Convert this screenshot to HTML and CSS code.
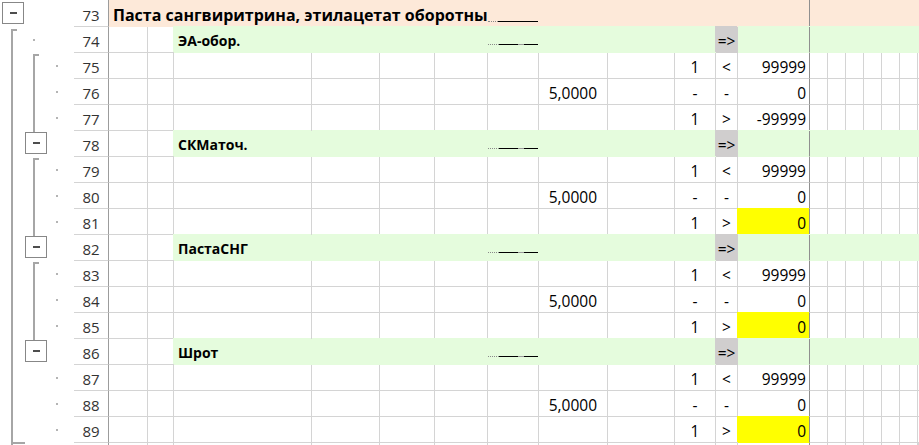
FILE: index.html
```html
<!DOCTYPE html>
<html lang="ru">
<head>
<meta charset="utf-8">
<title>Sheet</title>
<link rel="stylesheet" href="styles.css">
</head>
<body>
<div class="sheet">
  <div class="outline">
    <svg width="74" height="445" viewBox="0 0 74 445" xmlns="http://www.w3.org/2000/svg">
      <g class="br">
        <rect x="11" y="29" width="2" height="416"/>
        <rect x="11" y="29" width="6" height="2"/>
        <rect x="11" y="442" width="14" height="2"/>
        <rect x="33" y="54" width="6" height="2"/>
        <rect x="33" y="54" width="2" height="78"/>
        <rect x="33" y="158" width="6" height="2"/>
        <rect x="33" y="158" width="2" height="78"/>
        <rect x="33" y="262" width="6" height="2"/>
        <rect x="33" y="262" width="2" height="78"/>
      </g>
      <g class="dot">
        <rect x="33" y="39" width="2" height="2"/>
        <rect x="56" y="65" width="2" height="2"/>
        <rect x="56" y="91" width="2" height="2"/>
        <rect x="56" y="117" width="2" height="2"/>
        <rect x="56" y="169" width="2" height="2"/>
        <rect x="56" y="195" width="2" height="2"/>
        <rect x="56" y="221" width="2" height="2"/>
        <rect x="56" y="273" width="2" height="2"/>
        <rect x="56" y="299" width="2" height="2"/>
        <rect x="56" y="325" width="2" height="2"/>
        <rect x="56" y="377" width="2" height="2"/>
        <rect x="56" y="403" width="2" height="2"/>
        <rect x="56" y="429" width="2" height="2"/>
      </g>
      <g class="box">
        <rect x="2.5" y="2.5" width="21" height="21"/>
        <rect x="25.5" y="132.5" width="21" height="21"/>
        <rect x="25.5" y="236.5" width="21" height="21"/>
        <rect x="25.5" y="340.5" width="21" height="21"/>
      </g>
      <g class="minus">
        <rect x="10" y="12" width="7" height="2"/>
        <rect x="33" y="142" width="7" height="2"/>
        <rect x="33" y="246" width="7" height="2"/>
        <rect x="33" y="350" width="7" height="2"/>
      </g>
    </svg>
  </div>
  <div class="grid">
    <div class="row top">
      <div class="hd">73</div>
      <div class="pe t1">Паста сангвиритрина, этилацетат оборотный</div>
      <div class="pe ulc ul1"><span class="dots"></span><span class="ln ln-a"></span></div>
      <i class="pe"></i><i class="pe"></i><i class="pe"></i><i class="pe"></i>
      <i class="pe sep"></i>
      <i class="pe"></i><i class="pe"></i><i class="pe"></i><i class="pe"></i><i class="pe"></i><i class="pe"></i><i class="pe"></i>
    </div>

    <div class="row">
      <div class="hd">74</div>
      <i></i><i></i>
      <div class="gr gf t2">ЭА-обор.</div>
      <i class="gr"></i><i class="gr"></i><i class="gr"></i>
      <div class="gr ulc ul2"><span class="dots"></span><span class="ln ln-b"></span><span class="ln ln-c"></span><span class="ln ln-d"></span></div>
      <i class="gr"></i><i class="gr"></i><i class="gr"></i>
      <div class="gy ctr">=&gt;</div>
      <i class="gr sep"></i>
      <i class="gr"></i><i class="gr"></i><i class="gr"></i><i class="gr"></i><i class="gr"></i><i class="gr"></i><i class="gr"></i>
    </div>
    <div class="row">
      <div class="hd">75</div>
      <i></i><i></i><i></i><i></i><i></i><i></i><i></i><i></i><i></i>
      <div class="ctr">1</div><div class="ctr">&lt;</div><div class="rt sep">99999</div>
      <i></i><i></i><i></i><i></i><i></i><i></i><i></i>
    </div>
    <div class="row">
      <div class="hd">76</div>
      <i></i><i></i><i></i><i></i><i></i><i></i><i></i>
      <div class="num">5,0000</div><i></i>
      <div class="ctr">-</div><div class="ctr">-</div><div class="rt sep">0</div>
      <i></i><i></i><i></i><i></i><i></i><i></i><i></i>
    </div>
    <div class="row">
      <div class="hd">77</div>
      <i></i><i></i><i></i><i></i><i></i><i></i><i></i><i></i><i></i>
      <div class="ctr">1</div><div class="ctr">&gt;</div><div class="rt sep">-99999</div>
      <i></i><i></i><i></i><i></i><i></i><i></i><i></i>
    </div>

    <div class="row">
      <div class="hd">78</div>
      <i></i><i></i>
      <div class="gr gf t2">СКМаточ.</div>
      <i class="gr"></i><i class="gr"></i><i class="gr"></i>
      <div class="gr ulc ul2"><span class="dots"></span><span class="ln ln-b"></span><span class="ln ln-c"></span><span class="ln ln-d"></span></div>
      <i class="gr"></i><i class="gr"></i><i class="gr"></i>
      <div class="gy ctr">=&gt;</div>
      <i class="gr sep"></i>
      <i class="gr"></i><i class="gr"></i><i class="gr"></i><i class="gr"></i><i class="gr"></i><i class="gr"></i><i class="gr"></i>
    </div>
    <div class="row">
      <div class="hd">79</div>
      <i></i><i></i><i></i><i></i><i></i><i></i><i></i><i></i><i></i>
      <div class="ctr">1</div><div class="ctr">&lt;</div><div class="rt sep">99999</div>
      <i></i><i></i><i></i><i></i><i></i><i></i><i></i>
    </div>
    <div class="row">
      <div class="hd">80</div>
      <i></i><i></i><i></i><i></i><i></i><i></i><i></i>
      <div class="num">5,0000</div><i></i>
      <div class="ctr">-</div><div class="ctr">-</div><div class="rt sep">0</div>
      <i></i><i></i><i></i><i></i><i></i><i></i><i></i>
    </div>
    <div class="row">
      <div class="hd">81</div>
      <i></i><i></i><i></i><i></i><i></i><i></i><i></i><i></i><i></i>
      <div class="ctr">1</div><div class="ctr">&gt;</div><div class="rt ye sep">0</div>
      <i></i><i></i><i></i><i></i><i></i><i></i><i></i>
    </div>

    <div class="row">
      <div class="hd">82</div>
      <i></i><i></i>
      <div class="gr gf t2">ПастаСНГ</div>
      <i class="gr"></i><i class="gr"></i><i class="gr"></i>
      <div class="gr ulc ul2"><span class="dots"></span><span class="ln ln-b"></span><span class="ln ln-c"></span><span class="ln ln-d"></span></div>
      <i class="gr"></i><i class="gr"></i><i class="gr"></i>
      <div class="gy ctr">=&gt;</div>
      <i class="gr sep"></i>
      <i class="gr"></i><i class="gr"></i><i class="gr"></i><i class="gr"></i><i class="gr"></i><i class="gr"></i><i class="gr"></i>
    </div>
    <div class="row">
      <div class="hd">83</div>
      <i></i><i></i><i></i><i></i><i></i><i></i><i></i><i></i><i></i>
      <div class="ctr">1</div><div class="ctr">&lt;</div><div class="rt sep">99999</div>
      <i></i><i></i><i></i><i></i><i></i><i></i><i></i>
    </div>
    <div class="row">
      <div class="hd">84</div>
      <i></i><i></i><i></i><i></i><i></i><i></i><i></i>
      <div class="num">5,0000</div><i></i>
      <div class="ctr">-</div><div class="ctr">-</div><div class="rt sep">0</div>
      <i></i><i></i><i></i><i></i><i></i><i></i><i></i>
    </div>
    <div class="row">
      <div class="hd">85</div>
      <i></i><i></i><i></i><i></i><i></i><i></i><i></i><i></i><i></i>
      <div class="ctr">1</div><div class="ctr">&gt;</div><div class="rt ye sep">0</div>
      <i></i><i></i><i></i><i></i><i></i><i></i><i></i>
    </div>

    <div class="row">
      <div class="hd">86</div>
      <i></i><i></i>
      <div class="gr gf t2">Шрот</div>
      <i class="gr"></i><i class="gr"></i><i class="gr"></i>
      <div class="gr ulc ul2"><span class="dots"></span><span class="ln ln-b"></span><span class="ln ln-c"></span><span class="ln ln-d"></span></div>
      <i class="gr"></i><i class="gr"></i><i class="gr"></i>
      <div class="gy ctr">=&gt;</div>
      <i class="gr sep"></i>
      <i class="gr"></i><i class="gr"></i><i class="gr"></i><i class="gr"></i><i class="gr"></i><i class="gr"></i><i class="gr"></i>
    </div>
    <div class="row">
      <div class="hd">87</div>
      <i></i><i></i><i></i><i></i><i></i><i></i><i></i><i></i><i></i>
      <div class="ctr">1</div><div class="ctr">&lt;</div><div class="rt sep">99999</div>
      <i></i><i></i><i></i><i></i><i></i><i></i><i></i>
    </div>
    <div class="row">
      <div class="hd">88</div>
      <i></i><i></i><i></i><i></i><i></i><i></i><i></i>
      <div class="num">5,0000</div><i></i>
      <div class="ctr">-</div><div class="ctr">-</div><div class="rt sep">0</div>
      <i></i><i></i><i></i><i></i><i></i><i></i><i></i>
    </div>
    <div class="row">
      <div class="hd">89</div>
      <i></i><i></i><i></i><i></i><i></i><i></i><i></i><i></i><i></i>
      <div class="ctr">1</div><div class="ctr">&gt;</div><div class="rt ye sep">0</div>
      <i></i><i></i><i></i><i></i><i></i><i></i><i></i>
    </div>
    <div class="row tail">
      <i class="hd"></i>
      <i></i><i></i><i></i><i></i><i></i><i></i><i></i><i></i><i></i>
      <i></i><i></i><i class="sep"></i>
      <i></i><i></i><i></i><i></i><i></i><i></i><i></i>
    </div>
  </div>
</div>
</body>
</html>
```
FILE: styles.css
```css
* {
  box-sizing: border-box;
  margin: 0;
  padding: 0;
}

html,
body {
  background: #ffffff;
}

body {
  width: 919px;
  height: 445px;
  overflow: hidden;
  font-family: "Open Sans", "Liberation Sans", sans-serif;
  color: #000000;
}

.sheet {
  display: flex;
  align-items: flex-start;
  height: 445px;
  overflow: hidden;
}

.outline {
  width: 74px;
  flex: none;
}

.outline svg {
  display: block;
}

.br rect {
  fill: #a6a6a6;
}

.dot rect {
  fill: #b4b4b4;
}

.box rect {
  fill: #ffffff;
  stroke: #878787;
  stroke-width: 1;
}

.minus rect {
  fill: #4d4d4d;
}

.grid {
  flex: 1;
  min-width: 0;
}

.row {
  display: grid;
  grid-template-columns: 35px 39px 26px 138px 68px 55px 53px 51px 69px 67px 41px 22px 72px repeat(6, 18px) 1fr;
  height: 26px;
}

.row.top {
  height: 27px;
}

.row.tail {
  height: 3px;
}

.row > * {
  display: flex;
  align-items: flex-end;
  min-width: 0;
  overflow: hidden;
  white-space: nowrap;
  border-right: 1px solid #d4d4d4;
  border-bottom: 1px solid #d4d4d4;
  padding: 0 3px 2px 3px;
  font-size: 15.5px;
  line-height: 18px;
  font-style: normal;
  font-weight: 400;
}

.row.tail > * {
  border-bottom: 0;
  padding: 0;
}

.row > .hd {
  justify-content: center;
  padding: 0 0 2px 0;
  border-right-color: #9c9c9c;
  color: #333333;
  font-size: 15px;
}

.row > .ctr {
  justify-content: center;
  padding-left: 0;
  padding-right: 0;
}

.row > .rt {
  justify-content: flex-end;
}

.row > .num {
  justify-content: flex-end;
  padding-right: 10px;
}

/* fills */
.row > .pe {
  background: #fde9d9;
  border-color: transparent;
}

.row > .gr {
  background: #e5fcdd;
  border-color: transparent;
  box-shadow: 0 -1px 0 #e5fcdd;
}

.row > .gf {
  box-shadow: -1px -1px 0 #e5fcdd;
}

.row > .gy {
  background: #d0cece;
  border-color: transparent;
  box-shadow: -1px -1px 0 #d0cece;
}

.row > .ye {
  background: #ffff00;
  border-color: transparent;
  box-shadow: -1px -1px 0 #ffff00;
}

.row > .sep {
  border-right-color: #8f8f8f;
}

/* titles */
.row > .t1 {
  grid-column: 2 / 8;
  font-weight: 700;
  font-size: 16px;
  padding-left: 4px;
  padding-right: 0;
}

.row > .t2 {
  font-weight: 700;
  font-size: 14px;
  padding-left: 4px;
  padding-bottom: 2px;
}

/* underline placeholder cell */
.row > .ulc {
  padding: 0;
}

.row > .ul1 {
  padding-bottom: 4px;
}

.row > .ul2 {
  padding-bottom: 7px;
}

.dots {
  display: block;
  width: 10px;
  height: 0;
  border-bottom: 1px dotted #8a8a8a;
}

.ul2 .dots {
  width: 11px;
}

.ln {
  display: block;
  height: 0;
  border-bottom: 1px solid #000000;
}

.ln-a {
  width: 40px;
}

.ln-b {
  width: 19px;
}

.ln-c {
  width: 6px;
  border-bottom-color: #9a9a9a;
}

.ln-d {
  width: 14px;
}
```
